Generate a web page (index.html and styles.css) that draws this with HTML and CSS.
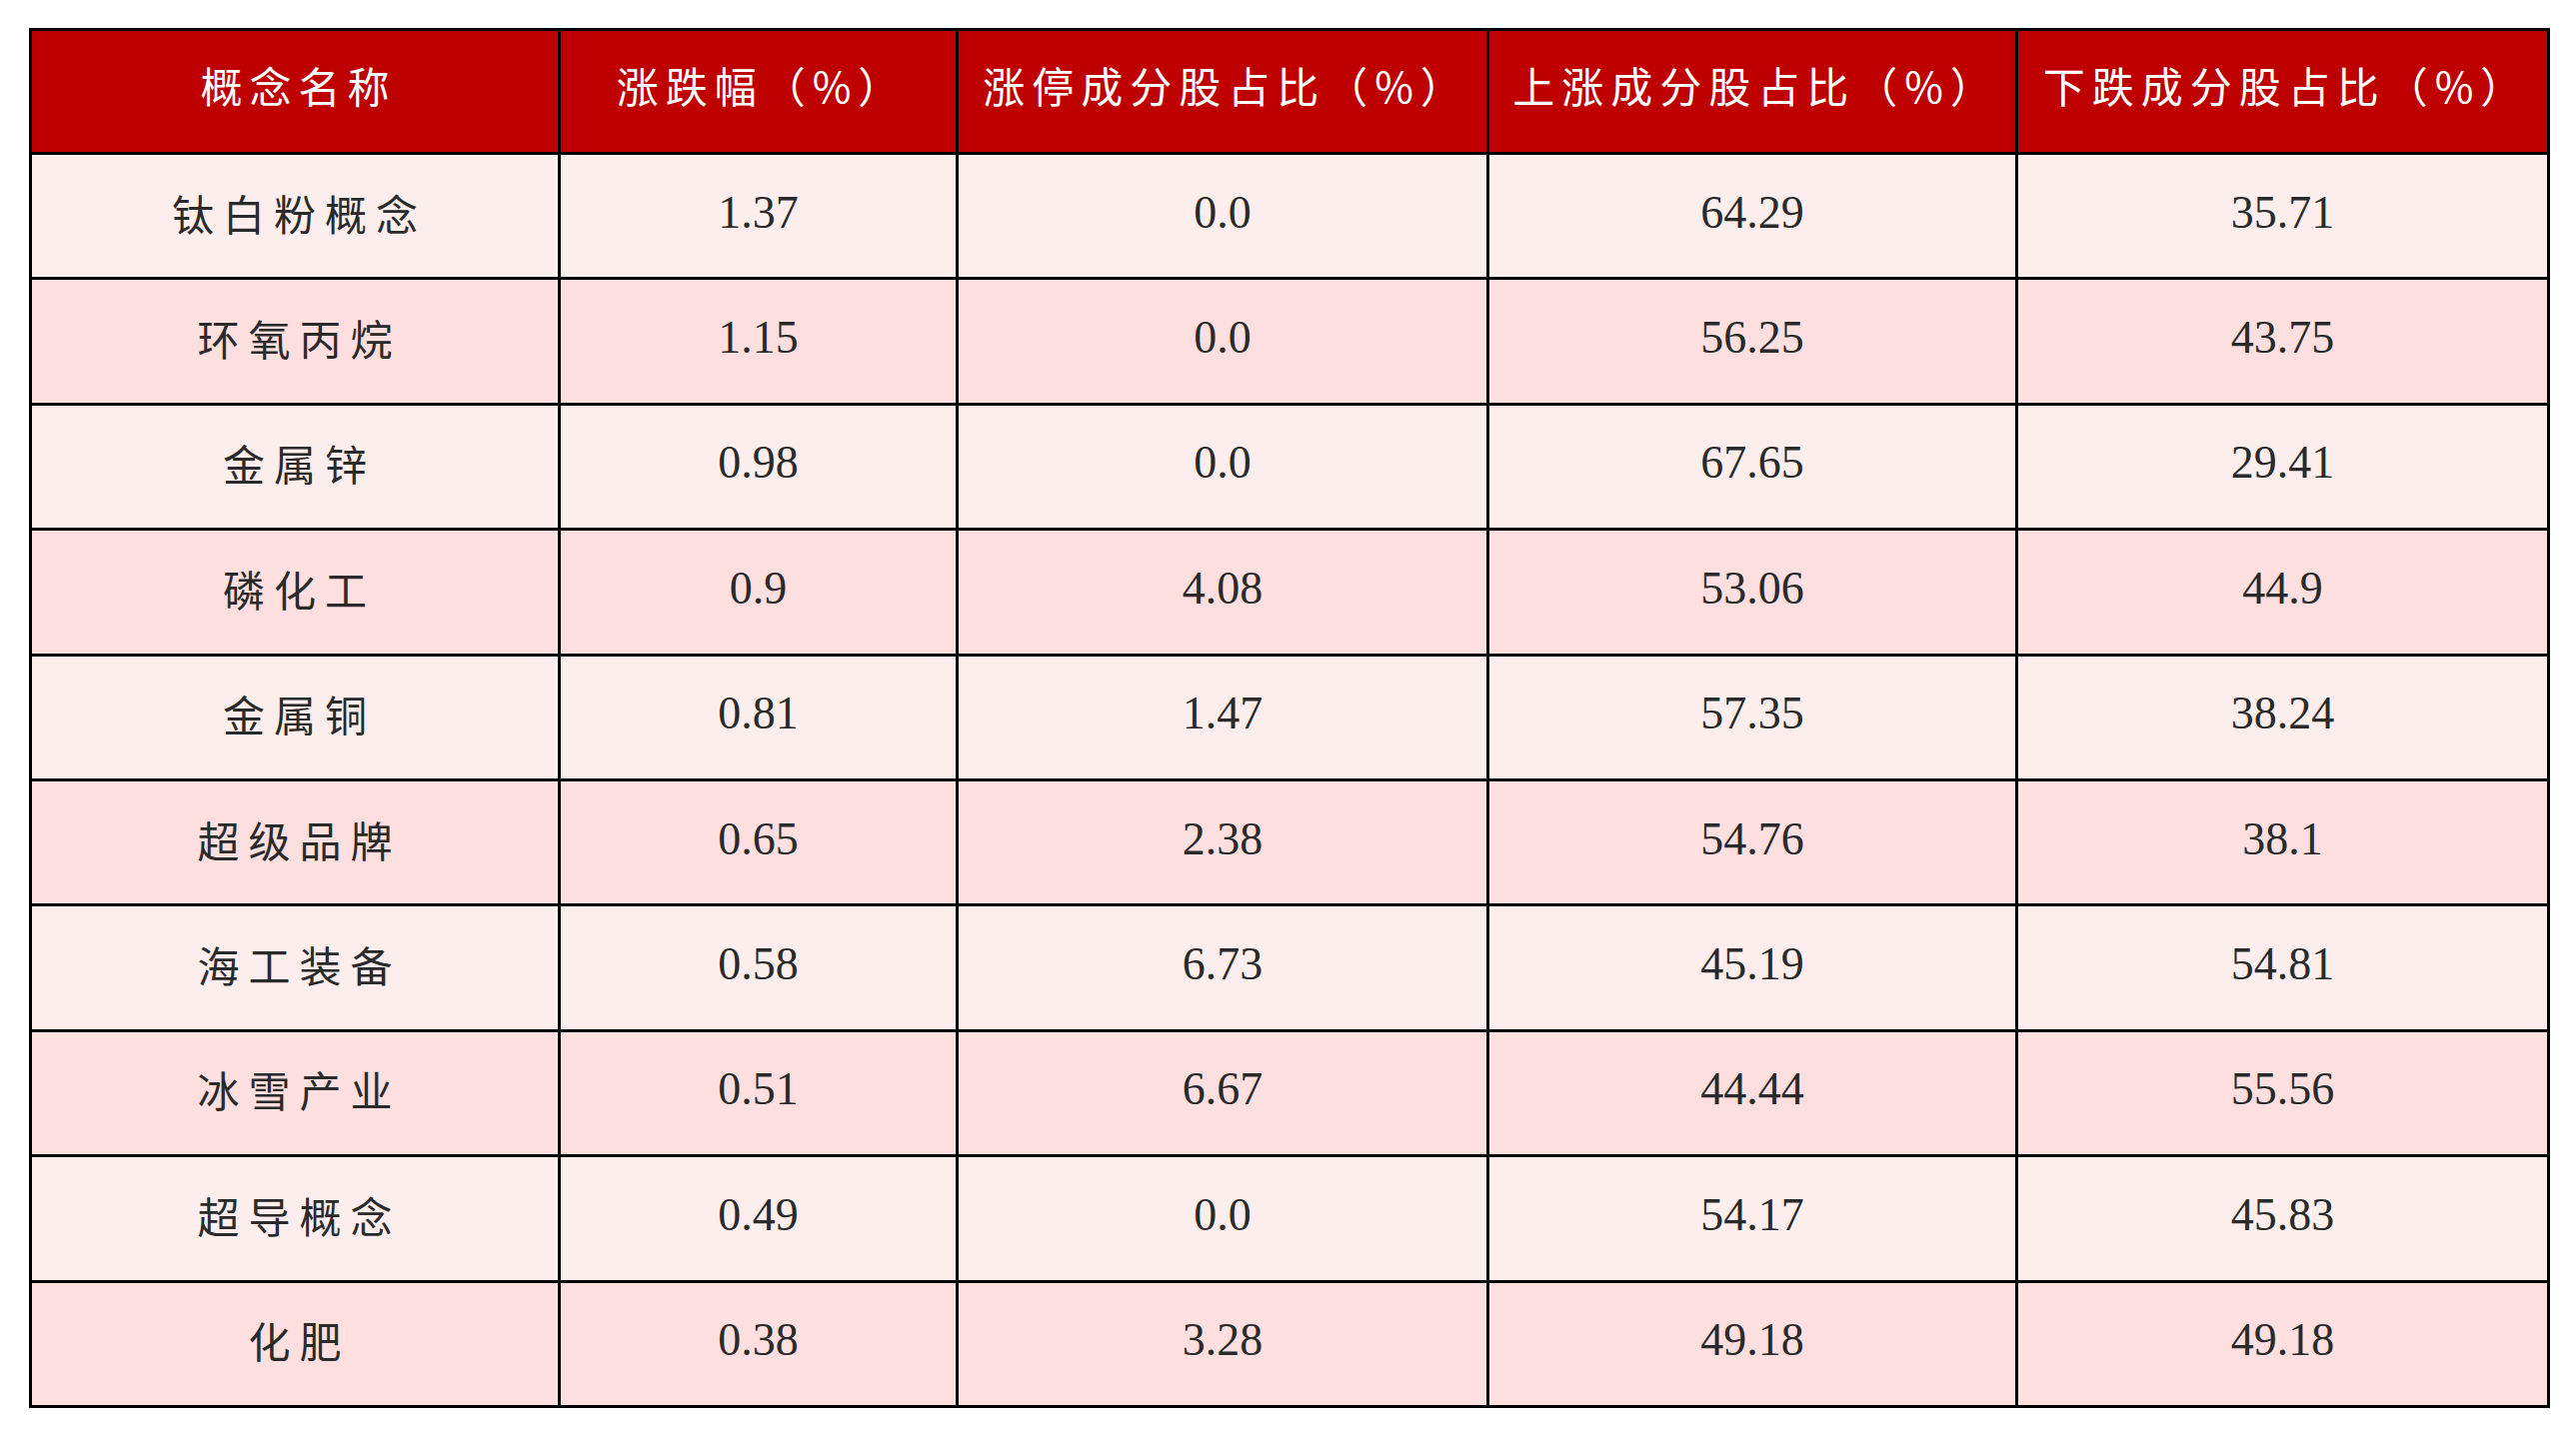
FILE: index.html
```html
<!DOCTYPE html>
<html lang="zh-CN">
<head>
<meta charset="utf-8">
<title>概念板块</title>
<link rel="stylesheet" href="styles.css">
</head>
<body>
<div class="wrap">
<table class="data">
<colgroup>
<col class="c1"><col class="c2"><col class="c3"><col class="c4"><col class="c5">
</colgroup>
<thead>
<tr><th>概念名称</th><th>涨跌幅（%）</th><th>涨停成分股占比（%）</th><th>上涨成分股占比（%）</th><th>下跌成分股占比（%）</th></tr>
</thead>
<tbody>
<tr><td class="name">钛白粉概念</td><td>1.37</td><td>0.0</td><td>64.29</td><td>35.71</td></tr>
<tr><td class="name">环氧丙烷</td><td>1.15</td><td>0.0</td><td>56.25</td><td>43.75</td></tr>
<tr><td class="name">金属锌</td><td>0.98</td><td>0.0</td><td>67.65</td><td>29.41</td></tr>
<tr><td class="name">磷化工</td><td>0.9</td><td>4.08</td><td>53.06</td><td>44.9</td></tr>
<tr><td class="name">金属铜</td><td>0.81</td><td>1.47</td><td>57.35</td><td>38.24</td></tr>
<tr><td class="name">超级品牌</td><td>0.65</td><td>2.38</td><td>54.76</td><td>38.1</td></tr>
<tr><td class="name">海工装备</td><td>0.58</td><td>6.73</td><td>45.19</td><td>54.81</td></tr>
<tr><td class="name">冰雪产业</td><td>0.51</td><td>6.67</td><td>44.44</td><td>55.56</td></tr>
<tr><td class="name">超导概念</td><td>0.49</td><td>0.0</td><td>54.17</td><td>45.83</td></tr>
<tr><td class="name">化肥</td><td>0.38</td><td>3.28</td><td>49.18</td><td>49.18</td></tr>
</tbody>
</table>
</div>
</body>
</html>
```
FILE: styles.css
```css
html, body {
  margin: 0;
  padding: 0;
  background: #ffffff;
}
.wrap {
  padding: 28px 0 0 29px;
}
.data {
  border-collapse: collapse;
  table-layout: fixed;
  width: 2519px;
  font-family: "Liberation Serif", "Noto Sans CJK SC", serif;
  color: #2a2a2a;
}
.c1 { width: 529px; }
.c2 { width: 398px; }
.c3 { width: 531px; }
.c4 { width: 529px; }
.c5 { width: 532px; }
.data th, .data td {
  border: 3px solid #000;
  text-align: center;
  vertical-align: middle;
  padding: 0;
}
.data th {
  height: 106px;
  background: #be0000;
  color: #ffffff;
  font-family: "Noto Sans CJK SC", sans-serif;
  font-weight: 400;
  font-size: 42px;
  letter-spacing: 7px;
  padding-bottom: 15px;
  padding-left: 7px;
}
.data td {
  height: 114.4px;
  padding-bottom: 8px;
  font-size: 46px;
}
.data td.name {
  font-family: "Noto Sans CJK SC", sans-serif;
  font-size: 42px;
  letter-spacing: 9px;
  padding-left: 9px;
}
.data tbody tr:nth-child(odd) td {
  background: #fdeeee;
}
.data tbody tr:nth-child(even) td {
  background: #fddfe0;
}
```
